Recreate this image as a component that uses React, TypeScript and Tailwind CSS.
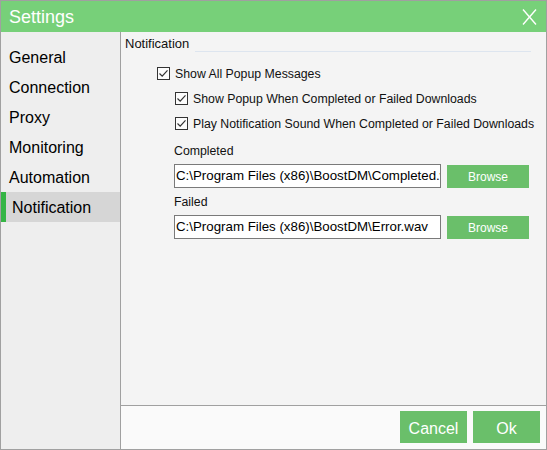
import React from "react";

const font = { fontFamily: '"Liberation Sans", Arial, sans-serif' };

function CheckBox() {
  return (
    <span className="w-[13px] h-[13px] border border-[#333333] bg-[#fcfcfc] flex items-center justify-center shrink-0">
      <svg width="11" height="11" viewBox="0 0 11 11">
        <path d="M1.5 5.5 L4.2 8.2 L9.5 2.3" fill="none" stroke="#333333" strokeWidth="1.2" />
      </svg>
    </span>
  );
}

function CheckRow({ label, indent }: { label: string; indent: string }) {
  return (
    <div className={`flex items-center gap-[5px] h-[16px] ${indent}`}>
      <CheckBox />
      <span className="text-[12.3px] text-[#111] leading-[16px] pt-[1px]">{label}</span>
    </div>
  );
}

function PathField({ label, value, top }: { label: string; value: string; top: string }) {
  return (
    <div className={`ml-[53px] ${top}`}>
      <div className="text-[12.3px] leading-[15px] text-[#111]">{label}</div>
      <div className="flex items-center mt-[5px]">
        <div className="w-[267px] h-[24px] border border-[#7a7a7a] bg-white px-[1px] text-[13.3px] leading-[22px] text-black overflow-hidden whitespace-nowrap">
          {value}
        </div>
        <button className="ml-[6px] w-[82px] h-[23px] bg-[#6abf6a] text-white text-[12px] pt-[2px]">
          Browse
        </button>
      </div>
    </div>
  );
}

export default function App() {
  const items = ["General", "Connection", "Proxy", "Monitoring", "Automation", "Notification"];

  return (
    <div style={font} className="w-[547px] h-[450px] border border-[#a0a0a0] flex flex-col bg-[#f4f4f4]">
      <div className="h-[31px] bg-[#77d079] flex items-center justify-between pl-[8px] pr-[9px] shrink-0">
        <span className="text-white text-[18px] pt-[1px]">Settings</span>
        <svg width="15" height="16" viewBox="0 0 15 16">
          <path d="M1 0.5 L14 15.5 M14 0.5 L1 15.5" stroke="white" strokeWidth="1.4" />
        </svg>
      </div>

      <div className="flex flex-1 min-h-0">
        <div className="w-[120px] border-r border-[#a0a0a0] bg-[#eeeeee] pt-[10px] shrink-0">
          {items.map((it) => {
            const active = it === "Notification";
            return (
              <div
                key={it}
                className={`h-[30px] flex items-center pt-[2px] text-[16px] text-black ${
                  active ? "bg-[#d6d6d6] border-l-[5px] border-[#35b545] pl-[6px]" : "pl-[8px]"
                }`}
              >
                {it}
              </div>
            );
          })}
        </div>

        <div className="flex-1 flex flex-col">
          <div className="flex-1 pt-[4px]">
            <div className="flex items-start pl-[4px] pr-[15px]">
              <span className="text-[13px] leading-[16px] text-[#111]">Notification</span>
              <div className="flex-1 h-px bg-[#dde5ef] mt-[15px] ml-[6px]" />
            </div>

            <div className="mt-[13px]">
              <CheckRow label="Show All Popup Messages" indent="ml-[36px]" />
            </div>
            <div className="mt-[9px]">
              <CheckRow label="Show Popup When Completed or Failed Downloads" indent="ml-[54px]" />
            </div>
            <div className="mt-[9px]">
              <CheckRow label="Play Notification Sound When Completed or Failed Downloads" indent="ml-[54px]" />
            </div>

            <PathField
              label="Completed"
              value="C:\Program Files (x86)\BoostDM\Completed.wav"
              top="mt-[13px]"
            />
            <PathField
              label="Failed"
              value="C:\Program Files (x86)\BoostDM\Error.wav"
              top="mt-[7px]"
            />
          </div>

          <div className="h-[44px] border-t border-[#a0a0a0] bg-[#fafafa] flex justify-end items-start pt-[5px] pr-[6px] gap-[6px] shrink-0">
            <button className="w-[67px] h-[32px] bg-[#6abf6a] text-white text-[16px] pt-[3px]">Cancel</button>
            <button className="w-[67px] h-[32px] bg-[#6abf6a] text-white text-[16px] pt-[3px]">Ok</button>
          </div>
        </div>
      </div>
    </div>
  );
}
